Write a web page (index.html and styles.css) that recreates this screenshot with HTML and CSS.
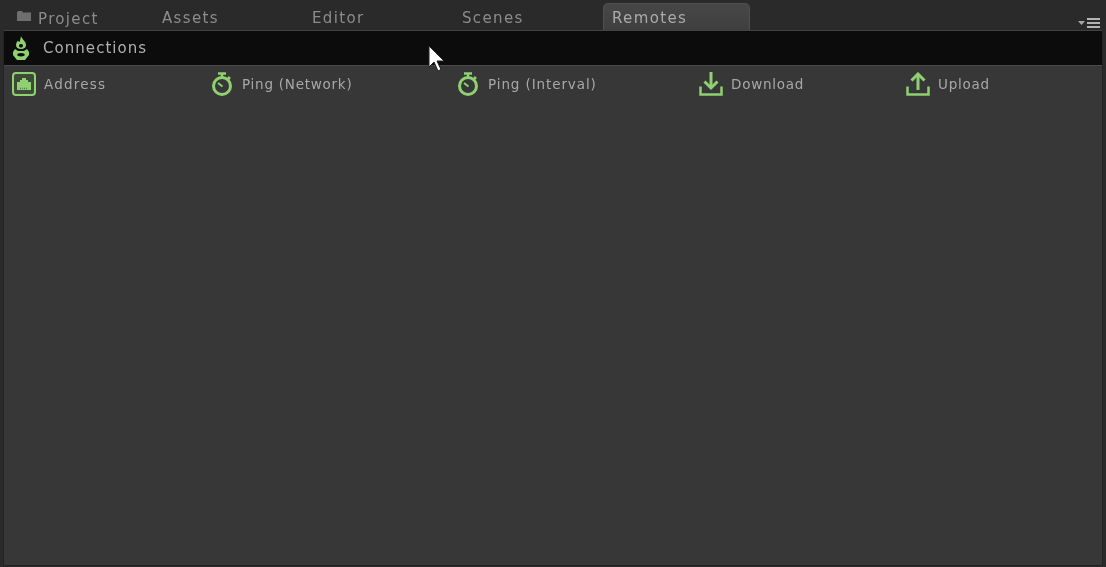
FILE: index.html
```html
<!DOCTYPE html>
<html lang="en">
<head>
  <meta charset="UTF-8" />
  <meta name="viewport" content="width=device-width, initial-scale=1.0" />
  <title>Remotes</title>
  <link rel="stylesheet" href="styles.css">
</head>
<body>
  <div class="window">
    <div class="tabs">
      <div class="tab tab-project">
        <svg class="folder" width="14" height="10" viewBox="0 0 14 10"><path d="M0 1.500 1 0h4l1 1.500h8V10H0z" fill="#6e6e6e"/></svg>
        <span>Project</span>
      </div>
      <div class="tab">Assets</div>
      <div class="tab">Editor</div>
      <div class="tab">Scenes</div>
      <div class="tab active">Remotes</div>
      <div class="tab-menu">
        <svg width="22" height="10" viewBox="0 0 22 10">
          <path d="M0 3h7L3.500 7z" fill="#a8a8a8"/>
          <path d="M9 1h13M9 5h13M9 9h13" stroke="#b4b4b4" stroke-width="2" fill="none"/>
        </svg>
      </div>
    </div>

    <div class="panel">
      <div class="panel-title">
        <svg class="icon-flame" width="16" height="24" viewBox="0 0 16 24" fill="#8fd071" fill-rule="evenodd">
          <path d="M8 0c.500 3 5 5 5 9 0 2.500-2 4-5 4s-5-1.500-5-4c0-2 1-3 2-4.500C5.500 5.500 6 6 6.500 6 7.500 4 7.500 2 8 0zM8 8c-1.200 0-2 .700-2 1.700s.800 1.800 2 1.800 2-.800 2-1.800S9.200 8 8 8z"/>
          <path d="M2 13l3 2h6l3-2 2 3v3l-4 5H4l-4-5v-3zM8 17c-2.200 0-3.800.800-3.800 1.800S5.800 20.500 8 20.500s3.800-.700 3.800-1.700S10.200 17 8 17z"/>
        </svg>
        <span>Connections</span>
      </div>

      <div class="columns">
        <div class="column col-address">
          <svg width="24" height="24" viewBox="0 0 24 24">
            <rect x="1" y="1" width="22" height="22" rx="3" fill="#3d4a38" stroke="#8fd071" stroke-width="2"/>
            <path d="M5 18V10h3V8h2V6h4v2h2v2h3v8z" fill="#8fd071"/>
            <path d="M8 16.500h8" stroke="#5a7d4b" stroke-width="1.500" stroke-dasharray="1 1"/>
          </svg>
          <span>Address</span>
        </div>
        <div class="column col-ping">
          <svg width="22" height="24" viewBox="0 0 22 24" fill="none" stroke="#8fd071">
            <circle cx="11" cy="14" r="8.500" stroke-width="3"/>
            <path d="M7 1.500h8M11 2v3M17 5l2 2" stroke-width="2.500"/>
            <path d="M7 11l4.500 3.500" stroke-width="2"/>
          </svg>
          <span>Ping (Network)</span>
        </div>
        <div class="column col-interval">
          <svg width="22" height="24" viewBox="0 0 22 24" fill="none" stroke="#8fd071">
            <circle cx="11" cy="14" r="8.500" stroke-width="3"/>
            <path d="M7 1.500h8M11 2v3M17 5l2 2" stroke-width="2.500"/>
            <path d="M7 11l4.500 3.500" stroke-width="2"/>
          </svg>
          <span>Ping (Interval)</span>
        </div>
        <div class="column col-download">
          <svg width="24" height="24" viewBox="0 0 24 24" fill="none" stroke="#8fd071">
            <path d="M12 0v15" stroke-width="3"/>
            <path d="M5.500 9.500 12 16l6.500-6.500" stroke-width="3"/>
            <path d="M1.500 14.500v8h21v-8" stroke-width="2.500"/>
          </svg>
          <span>Download</span>
        </div>
        <div class="column col-upload">
          <svg width="24" height="24" viewBox="0 0 24 24" fill="none" stroke="#8fd071">
            <path d="M12 2v16" stroke-width="3"/>
            <path d="M5.500 8.500 12 2l6.500 6.500" stroke-width="3"/>
            <path d="M1.500 14.500v8h21v-8" stroke-width="2.500"/>
          </svg>
          <span>Upload</span>
        </div>
      </div>
    </div>

    <svg class="cursor" width="18" height="27" viewBox="0 0 18 27">
      <path d="M1 1v21l5-5 4 9 3-1.500-4-8.500h7z" fill="#fff" stroke="#222" stroke-width="1"/>
    </svg>
  </div>
</body>
</html>
```

FILE: styles.css
```css
:root {
  --tabbar: #2a2a2a;
  --panel: #373737;
  --title: #0c0c0c;
  --label: #a8a8a8;
  --tab-label: #8c8c8c;
}

* {
  margin: 0;
  padding: 0;
  box-sizing: border-box;
}

html, body {
  height: 100%;
  overflow: hidden;
}

body {
  font-family: "DejaVu Sans", sans-serif;
  background: var(--tabbar);
  color: var(--label);
}

.window {
  position: relative;
  display: flex;
  flex-direction: column;
  height: 567px;
  padding: 0 3px 1px 3px;
  filter: blur(0.55px);
}

.tabs {
  display: flex;
  height: 30px;
  flex-shrink: 0;
  gap: 3px;
  padding-top: 3px;
  font-size: 15px;
  letter-spacing: 1.35px;
  color: var(--tab-label);
}

.tab {
  width: 147px;
  padding: 6px 0 0 9px;
  line-height: 18px;
}

.tab-project {
  display: flex;
  align-items: flex-start;
  gap: 7px;
  padding: 7px 0 0 14px;
}

.folder {
  margin-top: 1px;
}

.tab.active {
  background: linear-gradient(#474747, #3f3f3f);
  border: 1px solid #4f4f4f;
  border-bottom: none;
  border-radius: 5px 5px 0 0;
  color: #ababab;
  padding: 5px 0 0 8px;
}

.tab-menu {
  margin-left: auto;
  padding: 15px 3px 0 0;
}

.tab-menu svg {
  display: block;
}

.panel {
  flex: 1;
  display: flex;
  flex-direction: column;
  background: var(--panel);
  border: 1px solid #232323;
  border-top: 1px solid #414141;
}

.panel-title {
  display: flex;
  align-items: center;
  gap: 14px;
  height: 35px;
  padding-left: 9px;
  background: var(--title);
  border-bottom: 1px solid #4a4a4a;
  font-size: 15px;
  letter-spacing: 1.05px;
  color: #b0b0b0;
}

.columns {
  display: flex;
  height: 36px;
  align-items: center;
  padding-left: 8px;
  font-size: 13.5px;
  letter-spacing: 0.75px;
}

.column {
  display: flex;
  align-items: center;
  gap: 8px;
}

.col-address { width: 199px; letter-spacing: 1.2px; }
.col-ping { width: 246px; gap: 9px; }
.col-interval { width: 242px; gap: 9px; letter-spacing: 0.9px; }
.col-download { width: 207px; }

.cursor {
  position: absolute;
  left: 428px;
  top: 45px;
}
```
